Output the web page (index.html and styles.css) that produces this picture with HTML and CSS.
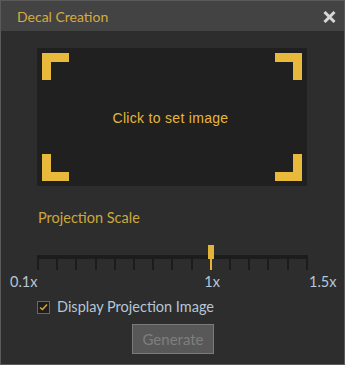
FILE: index.html
```html
<!DOCTYPE html>
<html lang="en">
<head>
  <meta charset="UTF-8">
  <title>Decal Creation</title>
  <link rel="stylesheet" href="styles.css">
</head>
<body>

  <div class="window">
    <div class="titlebar">
      <span class="title">Decal Creation</span>
      <svg class="close" width="13" height="12" viewBox="0 0 13 12">
        <path d="M1.5 1 L11.5 11 M11.5 1 L1.5 11" stroke="#d6d6d6" stroke-width="3" fill="none"/>
      </svg>
    </div>

    <div class="content">
      <div class="dropzone">
        <div class="corner tl"></div>
        <div></div>
        <div class="corner tr"></div>
        <div></div>
        <div class="drop-text">Click to set image</div>
        <div></div>
        <div class="corner bl"></div>
        <div></div>
        <div class="corner br"></div>
      </div>

      <div class="section-label">Projection Scale</div>

      <div class="slider">
        <div class="track-cell">
          <div class="track"></div>
          <div class="ticks">
            <span></span><span></span><span></span><span></span><span></span>
            <span></span><span></span><span></span><span></span><span class="active"></span>
            <span></span><span></span><span></span><span></span><span></span>
          </div>
        </div>
        <div class="lbl lbl-min">0.1x</div>
        <div class="lbl lbl-mid"><span style="margin-left: calc(64.29% - 7px)">1x</span></div>
        <div class="lbl lbl-max">1.5x</div>
      </div>

      <label class="check-row">
        <span class="checkbox">
          <svg width="9" height="8" viewBox="0 0 9 8">
            <path d="M1 4.5 L3.5 6.5 L8 1.5" stroke="#d9a93a" stroke-width="1.5" fill="none"/>
          </svg>
        </span>
        <span class="check-text">Display Projection Image</span>
      </label>

      <div class="actions">
        <button class="btn" disabled>Generate</button>
      </div>
    </div>
  </div>

</body>
</html>
```

FILE: styles.css
```css
body {
  margin: 0;
  background: #2d2d2d;
  font-family: Lato, "Noto Sans", sans-serif;
}
.window {
  width: 345px;
  height: 365px;
  box-sizing: border-box;
  border: 1px solid #5a5a5a;
  background: #2d2d2d;
  overflow: hidden;
}
.titlebar {
  height: 30px;
  background: #434343;
  display: flex;
  align-items: center;
  justify-content: space-between;
  padding: 0 8px 0 16px;
}
.title {
  color: #d6ac3c;
  font-size: 14px;
}
.close {
  display: block;
  margin-top: 1px;
}
.content {
  padding: 17px 0 0 36px;
}
.dropzone {
  width: 270px;
  height: 138px;
  box-sizing: border-box;
  padding: 5px;
  background: #202020;
  display: grid;
  grid-template-columns: 27px 1fr 27px;
  grid-template-rows: 27px 1fr 27px;
  cursor: pointer;
}
.corner {
  box-sizing: border-box;
  border: 0 solid #e8b93a;
}
.corner.tl { border-top-width: 9px; border-left-width: 9px; }
.corner.tr { border-top-width: 9px; border-right-width: 9px; }
.corner.bl { border-bottom-width: 9px; border-left-width: 9px; }
.corner.br { border-bottom-width: 9px; border-right-width: 9px; }
.drop-text {
  align-self: center;
  text-align: center;
  font-family: "Liberation Sans", Arial, sans-serif;
  font-size: 14px;
  letter-spacing: 0.3px;
  color: #e6b63a;
  margin-top: 2px;
  padding-right: 3px;
}
.section-label {
  margin-top: 22px;
  font-size: 14.5px;
  line-height: 20px;
  color: #c9a93c;
  padding-left: 1px;
}
.slider {
  margin-top: 17px;
  margin-left: -27px;
  display: grid;
  grid-template-columns: 27px 271px auto;
}
.track-cell {
  grid-column: 2;
  padding-top: 10px;
}
.track {
  height: 4px;
  background: #1c1c1c;
}
.ticks {
  display: flex;
  justify-content: space-between;
}
.ticks span {
  width: 2px;
  height: 11px;
  background: #1c1c1c;
  position: relative;
}
.ticks span.active {
  background: #e3b43a;
}
.ticks span.active::before {
  content: "";
  position: absolute;
  left: -2px;
  bottom: 11px;
  width: 6px;
  height: 14px;
  background: #e3b43a;
}
.lbl {
  font-size: 14.5px;
  line-height: 20px;
  color: #b6c6d6;
  margin-top: 2px;
}
.lbl-min {
  grid-column: 1;
  text-align: right;
}
.lbl-mid {
  grid-column: 2;
}
.lbl-max {
  grid-column: 3;
  padding-left: 1px;
}
.check-row {
  display: flex;
  align-items: center;
  gap: 7px;
  margin-top: 5px;
  cursor: pointer;
}
.checkbox {
  width: 13px;
  height: 13px;
  box-sizing: border-box;
  border: 1px solid #686868;
  background: #1e1e1e;
  display: flex;
  align-items: center;
  justify-content: center;
}
.check-text {
  font-size: 14.5px;
  line-height: 20px;
  color: #b6c6d6;
}
.actions {
  margin-top: 7px;
  margin-left: 95px;
}
.btn {
  width: 82px;
  height: 30px;
  background: #585858;
  border: 1px solid #7a7a7a;
  color: #7e7e7e;
  font-family: Lato, "Noto Sans", sans-serif;
  font-size: 15px;
  padding: 0;
}
```
